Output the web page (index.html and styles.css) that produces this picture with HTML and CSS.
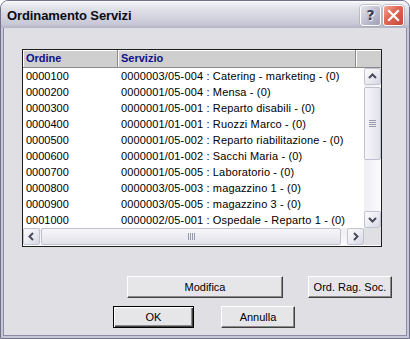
FILE: index.html
```html
<!DOCTYPE html>
<html lang="it">
<head>
    <meta charset="UTF-8">
    <title>Ordinamento Servizi</title>
    <link rel="stylesheet" href="styles.css">
</head>
<body>

<div class="window">
    <div class="titlebar">
        <span class="title">Ordinamento Servizi</span>
        <div class="caption-buttons">
            <button class="cap help">?</button>
            <button class="cap close">
                <svg width="13" height="13" viewBox="0 0 13 13"><path d="M2 2 L11 11 M11 2 L2 11" stroke="#fff" stroke-width="2.2" stroke-linecap="square"/></svg>
            </button>
        </div>
    </div>

    <div class="client">
        <div class="listview">
            <div class="lv-header">
                <div class="hd col-ord">Ordine</div>
                <div class="hd col-serv">Servizio</div>
                <div class="hd col-fill"></div>
            </div>
            <div class="lv-body">
                <div class="rows">
                    <div class="row"><span class="c1">0000100</span><span class="c2">0000003/05-004 : Catering - marketing - (0)</span></div>
                    <div class="row"><span class="c1">0000200</span><span class="c2">0000001/05-004 : Mensa - (0)</span></div>
                    <div class="row"><span class="c1">0000300</span><span class="c2">0000001/05-001 : Reparto disabili - (0)</span></div>
                    <div class="row"><span class="c1">0000400</span><span class="c2">0000001/01-001 : Ruozzi Marco - (0)</span></div>
                    <div class="row"><span class="c1">0000500</span><span class="c2">0000001/05-002 : Reparto riabilitazione - (0)</span></div>
                    <div class="row"><span class="c1">0000600</span><span class="c2">0000001/01-002 : Sacchi Maria - (0)</span></div>
                    <div class="row"><span class="c1">0000700</span><span class="c2">0000001/05-005 : Laboratorio - (0)</span></div>
                    <div class="row"><span class="c1">0000800</span><span class="c2">0000003/05-003 : magazzino 1 - (0)</span></div>
                    <div class="row"><span class="c1">0000900</span><span class="c2">0000003/05-005 : magazzino 3 - (0)</span></div>
                    <div class="row"><span class="c1">0001000</span><span class="c2">0000002/05-001 : Ospedale - Reparto 1 - (0)</span></div>
                </div>
                <div class="vscroll">
                    <div class="sb-btn">
                        <svg width="15" height="15" viewBox="0 0 15 15"><polyline points="4,9 7.5,5.5 11,9" fill="none" stroke="#4a4a5c" stroke-width="2"/></svg>
                    </div>
                    <div class="thumb v-thumb"><span class="grip-v"></span></div>
                    <div class="track"></div>
                    <div class="sb-btn">
                        <svg width="15" height="15" viewBox="0 0 15 15"><polyline points="4,6 7.5,9.5 11,6" fill="none" stroke="#4a4a5c" stroke-width="2"/></svg>
                    </div>
                </div>
            </div>
            <div class="hscroll">
                <div class="sb-btn">
                    <svg width="15" height="15" viewBox="0 0 15 15"><polyline points="9,4 5.5,7.5 9,11" fill="none" stroke="#4a4a5c" stroke-width="2"/></svg>
                </div>
                <div class="thumb h-thumb"><span class="grip-h"></span></div>
                <div class="track"></div>
                <div class="sb-btn">
                    <svg width="15" height="15" viewBox="0 0 15 15"><polyline points="6,4 9.5,7.5 6,11" fill="none" stroke="#4a4a5c" stroke-width="2"/></svg>
                </div>
                <div class="corner"></div>
            </div>
        </div>

        <div class="actions">
            <div class="action-row first">
                <button class="btn btn-modifica">Modifica</button>
                <button class="btn btn-ord">Ord. Rag. Soc.</button>
            </div>
            <div class="action-row second">
                <button class="btn btn-ok default">OK</button>
                <button class="btn btn-annulla">Annulla</button>
            </div>
        </div>
    </div>
</div>

</body>
</html>
```

FILE: styles.css
```css
body {
    margin: 0;
    background: #fff;
    font-family: 'Liberation Sans', Arial, sans-serif;
    font-size: 11px;
    color: #000;
}

.window {
    width: 410px;
    height: 339px;
    box-sizing: border-box;
    border: 1px solid #72728f;
    border-radius: 8px 8px 0 0;
    overflow: hidden;
    display: flex;
    flex-direction: column;
    background: #e0dfe3;
}

/* title bar, XP silver */
.titlebar {
    height: 27px;
    flex: none;
    display: flex;
    align-items: center;
    justify-content: space-between;
    padding: 0 5px 0 6px;
    background: linear-gradient(to bottom, #ffffff 0, #efeff4 2px, #e0e0e8 8px, #d4d4df 16px, #c8c8d6 23px, #b4b4c6 27px);
}

.title {
    font-weight: bold;
    font-size: 13px;
    letter-spacing: -0.1px;
    color: #0b0b14;
    padding-top: 1px;
}

.caption-buttons {
    display: flex;
    gap: 2px;
    margin-top: 1px;
}

.cap {
    width: 21px;
    height: 21px;
    padding: 0;
    border: 1px solid #fff;
    border-radius: 3px;
    display: flex;
    align-items: center;
    justify-content: center;
    box-shadow: 0 0 0 0.5px #9a9ab0;
}

.help {
    background: linear-gradient(135deg, #e4e4ee 0%, #c4c4d4 45%, #9e9eb6 100%);
    font-family: 'DejaVu Sans', sans-serif;
    font-weight: bold;
    font-size: 14px;
    color: #3a3a4e;
    text-shadow: 1px 1px 0 #f4f4f8;
    line-height: 19px;
}

.close {
    background: linear-gradient(135deg, #f2a898 0%, #e06a58 40%, #c84634 100%);
}

/* client area with the window frame */
.client {
    flex: 1;
    border-style: solid;
    border-color: #c6c6d6;
    border-width: 0 2px 2px;
    box-shadow: inset 1px 0 #8c8ca6, inset -1px 0 #8c8ca6, inset 0 -1px #8c8ca6;
    padding: 21px 0 0 19px;
}

/* list view */
.listview {
    width: 360px;
    height: 198px;
    box-sizing: border-box;
    border: 1px solid #1e1e1e;
    background: #fff;
    display: flex;
    flex-direction: column;
}

.lv-header {
    display: flex;
    height: 18px;
    flex: none;
}

.hd {
    box-sizing: border-box;
    height: 18px;
    background: #d0cfcf;
    border-right: 1px solid #8a8a8a;
    border-bottom: 1px solid #8a8a8a;
    box-shadow: inset 1px 1px #fff;
    padding-left: 3px;
    line-height: 17px;
    font-weight: bold;
    color: #10108a;
}

.col-ord { width: 95px; }
.col-serv { width: 238px; }
.col-fill { width: 25px; border-right: none; }

.lv-body {
    display: flex;
    height: 160px;
    flex: none;
}

.rows {
    flex: 1;
    overflow: hidden;
}

.row {
    height: 16px;
    line-height: 16px;
    white-space: nowrap;
    display: flex;
}

.c1 {
    width: 95px;
    padding-left: 3px;
    box-sizing: border-box;
}

.c2 {
    padding-left: 3px;
    letter-spacing: 0.15px;
}

/* scrollbars */
.vscroll {
    width: 17px;
    display: flex;
    flex-direction: column;
    background: linear-gradient(to right, #eeeef3, #fbfbfd);
}

.hscroll {
    height: 17px;
    flex: none;
    display: flex;
    background: linear-gradient(to bottom, #eeeef3, #fbfbfd);
}

.sb-btn {
    width: 17px;
    height: 17px;
    flex: none;
    box-sizing: border-box;
    border: 1px solid #c2c2d2;
    border-radius: 2px;
    background: linear-gradient(135deg, #fdfdfe 0%, #e8e8f0 60%, #d6d6e2 100%);
    display: flex;
    align-items: center;
    justify-content: center;
}

.track {
    flex: 1;
}

.thumb {
    box-sizing: border-box;
    border: 1px solid #c0c0d0;
    border-radius: 2px;
    display: flex;
    align-items: center;
    justify-content: center;
}

.v-thumb {
    height: 73px;
    margin-top: 2px;
    background: linear-gradient(to right, #f6f6fa, #e2e2ea);
}

.h-thumb {
    width: 300px;
    margin-left: 1px;
    background: linear-gradient(to bottom, #f6f6fa, #e2e2ea);
}

.grip-v {
    width: 7px;
    height: 7px;
    background: repeating-linear-gradient(to bottom, #9a9aae 0 1px, transparent 1px 2px);
}

.grip-h {
    width: 7px;
    height: 7px;
    background: repeating-linear-gradient(to right, #9a9aae 0 1px, transparent 1px 2px);
}

.corner {
    width: 17px;
    background: #e0dfe3;
}

/* buttons */
.actions {
    margin-top: 29px;
}

.action-row {
    display: flex;
}

.action-row.second {
    margin-top: 8px;
}

.btn {
    height: 22px;
    padding: 0;
    box-sizing: border-box;
    font-family: 'Liberation Sans', Arial, sans-serif;
    font-size: 11px;
    color: #000;
    background: #e6e5e8;
    border: 1px solid;
    border-color: #fff #404040 #404040 #fff;
    box-shadow: inset -1px -1px #8a8a8a;
}

.btn.default {
    border-color: #000;
    box-shadow: inset 1px 1px #fff, inset -1px -1px #404040, inset -2px -2px #8a8a8a;
}

.btn-modifica { width: 156px; margin-left: 105px; }
.btn-ord { width: 84px; margin-left: 25px; }
.btn-ok { width: 81px; margin-left: 91px; }
.btn-annulla { width: 74px; margin-left: 27px; }
```
